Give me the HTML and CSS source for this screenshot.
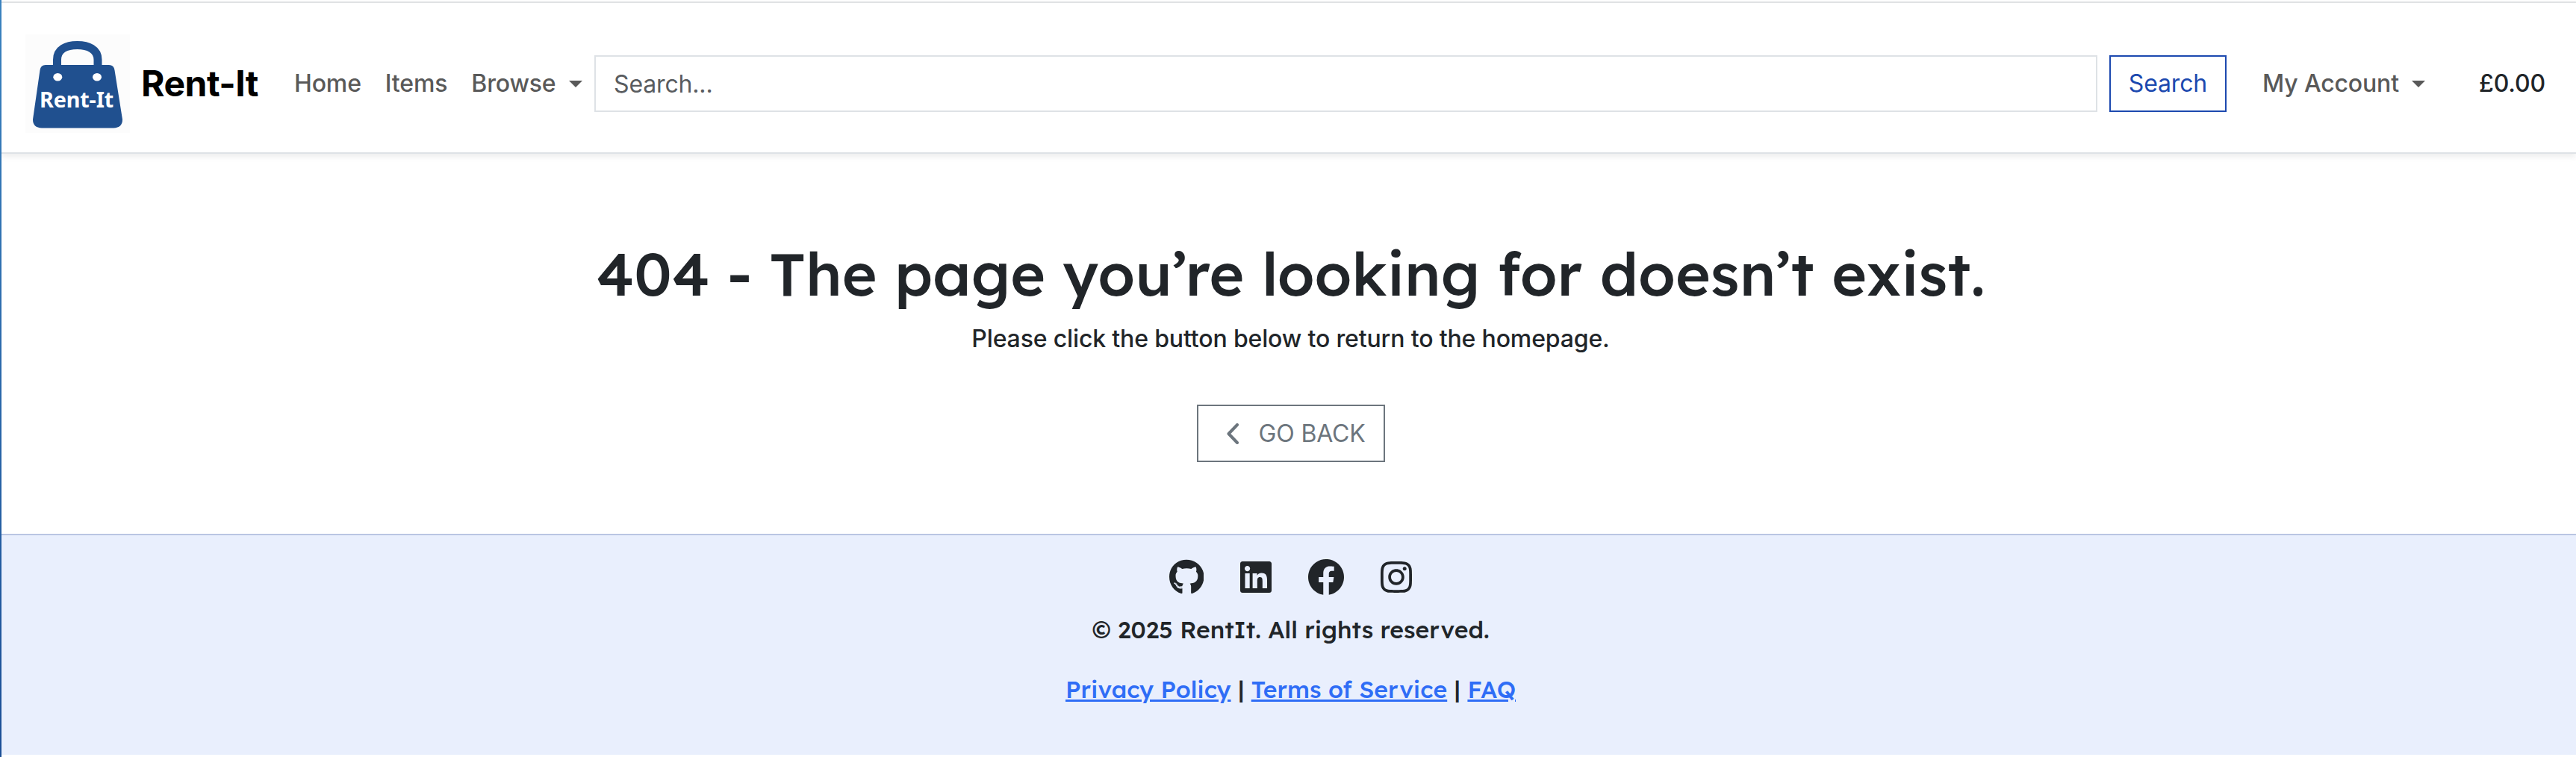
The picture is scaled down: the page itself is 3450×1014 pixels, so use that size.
FILE: index.html
```html
<!DOCTYPE html>
<html lang="en">
<head>
<meta charset="utf-8">
<title>Rent-It</title>
<link rel="stylesheet" href="styles.css">
</head>
<body>
<header class="navbar">
  <a class="brand">
    <svg class="logo" viewBox="0 0 140 132">
      <rect width="140" height="132" fill="#fcfcfc"/>
      <path d="M42.500 44V34C42.500 20 55 14.500 69.500 14.500S97 20 97 34V44" fill="none" stroke="#20508f" stroke-width="11"/>
      <path d="M27 41H112Q118.500 41 119.500 48L130 114Q130 125 118 125.500H22Q10 125 10 114L19.500 48Q20.500 41 27 41Z" fill="#20508f"/>
      <ellipse cx="43.300" cy="57.300" rx="6" ry="5.300" fill="#fff"/>
      <ellipse cx="96" cy="57.300" rx="6" ry="5.300" fill="#fff"/>
      <text class="logo-text" x="19" y="98" textLength="99" lengthAdjust="spacingAndGlyphs">Rent-It</text>
    </svg>
    <span class="brand-name">Rent-It</span>
  </a>
  <nav class="links">
    <a class="link">Home</a>
    <a class="link">Items</a>
    <a class="link toggle">Browse</a>
  </nav>
  <form class="search">
    <input class="field" type="text" placeholder="Search...">
    <button class="btn btn-search" type="button">Search</button>
  </form>
  <a class="link toggle account">My Account</a>
  <span class="total">£0.00</span>
</header>
<main class="content">
  <h1 class="title">404 - The page you’re looking for doesn’t exist.</h1>
  <p class="lead">Please click the button below to return to the homepage.</p>
  <a class="btn btn-back">
    <svg class="chevron" viewBox="0 0 16 28"><path d="M14 2L2.500 14L14 26" fill="none" stroke="currentColor" stroke-width="4" stroke-linecap="round" stroke-linejoin="round"/></svg>
    GO BACK
  </a>
</main>
<footer class="footer">
  <div class="social">
    <svg class="icon" width="46.500" height="48" viewBox="0 0 496 512"><path d="M165.900 397.400c0 2-2.300 3.600-5.200 3.600-3.300.3-5.600-1.300-5.600-3.600 0-2 2.300-3.600 5.200-3.600 3-.3 5.600 1.300 5.600 3.600zm-31.100-4.500c-.7 2 1.300 4.300 4.300 4.900 2.600 1 5.600 0 6.200-2s-1.300-4.300-4.300-5.200c-2.600-.7-5.500.3-6.200 2.300zm44.200-1.700c-2.900.7-4.900 2.600-4.600 4.900.3 2 2.900 3.300 5.900 2.600 2.900-.7 4.900-2.600 4.600-4.600-.3-1.900-3-3.200-5.900-2.900zM244.800 8C106.100 8 0 113.300 0 252c0 110.900 69.800 205.800 169.500 239.200 12.800 2.300 17.300-5.600 17.300-12.100 0-6.200-.3-40.400-.3-61.400 0 0-70 15-84.700-29.800 0 0-11.400-29.100-27.800-36.600 0 0-22.900-15.700 1.600-15.400 0 0 24.900 2 38.600 25.800 21.900 38.600 58.600 27.500 72.900 20.900 2.300-16 8.800-27.100 16-33.700-55.900-6.200-112.300-14.300-112.300-110.500 0-27.500 7.600-41.300 23.600-58.900-2.600-6.500-11.100-33.300 2.600-67.900 20.900-6.500 69 27 69 27 20-5.600 41.500-8.500 62.800-8.500s42.800 2.900 62.800 8.500c0 0 48.100-33.600 69-27 13.700 34.700 5.200 61.400 2.600 67.900 16 17.700 25.800 31.500 25.800 58.900 0 96.500-58.900 104.200-114.800 110.500 9.200 7.900 17 22.900 17 46.400 0 33.700-.3 75.400-.3 83.600 0 6.500 4.600 14.400 17.300 12.100C428.200 457.800 496 362.900 496 252 496 113.300 383.500 8 244.800 8zM97.200 352.900c-1.300 1-1 3.300.7 5.200 1.600 1.600 3.900 2.300 5.200 1 1.300-1 1-3.300-.7-5.200-1.600-1.600-3.900-2.300-5.200-1zm-10.800-8.100c-.7 1.300.3 2.900 2.300 3.900 1.600 1 3.600.7 4.300-.7.7-1.300-.3-2.900-2.300-3.900-2-.6-3.600-.3-4.300.7zm32.400 35.600c-1.600 1.300-1 4.300 1.300 6.200 2.300 2.300 5.200 2.600 6.500 1 1.300-1.300.7-4.300-1.300-6.200-2.200-2.300-5.200-2.600-6.500-1zm-11.400-14.700c-1.600 1-1.600 3.600 0 5.900 1.600 2.300 4.300 3.300 5.600 2.300 1.600-1.300 1.600-3.900 0-6.200-1.400-2.300-4-3.300-5.600-2z"/></svg>
    <svg class="icon" width="42" height="48" viewBox="0 0 448 512"><path d="M416 32H31.900C14.300 32 0 46.500 0 64.300v383.400C0 465.500 14.300 480 31.900 480H416c17.600 0 32-14.500 32-32.300V64.300c0-17.800-14.400-32.300-32-32.300zM135.400 416H69V202.200h66.500V416zm-33.200-243c-21.300 0-38.500-17.300-38.500-38.500S80.900 96 102.200 96c21.200 0 38.500 17.300 38.500 38.500 0 21.300-17.200 38.500-38.500 38.500zm282.100 243h-66.400V312c0-24.800-.5-56.700-34.500-56.700-34.600 0-39.900 27-39.900 54.900V416h-66.400V202.200h63.700v29.200h.9c8.900-16.800 30.600-34.500 62.900-34.500 67.200 0 79.700 44.300 79.700 101.900V416z"/></svg>
    <svg class="icon" width="48" height="48" viewBox="0 0 512 512"><path d="M512 256C512 114.600 397.400 0 256 0S0 114.600 0 256c0 127.800 93.600 233.700 216 252.900V330h-65v-74h65v-56.400c0-64.200 38.200-99.600 96.700-99.600 28 0 57.300 5 57.300 5v63h-32.300c-31.800 0-41.700 19.700-41.700 40v48h71l-11.400 74H296v178.900C418.400 489.700 512 383.800 512 256z"/></svg>
    <svg class="icon" width="42" height="48" viewBox="0 0 448 512"><path d="M224.100 141c-63.600 0-114.900 51.300-114.900 114.900s51.300 114.900 114.900 114.900S339 319.500 339 255.900 287.700 141 224.100 141zm0 189.600c-41.100 0-74.700-33.500-74.700-74.700s33.500-74.700 74.700-74.700 74.700 33.500 74.700 74.700-33.600 74.700-74.700 74.700zm146.400-194.300c0 14.900-12 26.800-26.800 26.800-14.900 0-26.800-12-26.800-26.800s12-26.800 26.800-26.800 26.800 12 26.800 26.800zm76.100 27.200c-1.700-35.900-9.900-67.700-36.200-93.900-26.200-26.200-58-34.400-93.900-36.200-37-2.100-147.900-2.100-184.900 0-35.800 1.700-67.600 9.900-93.900 36.100s-34.400 58-36.200 93.900c-2.100 37-2.100 147.900 0 184.900 1.700 35.900 9.900 67.700 36.200 93.900s58 34.400 93.900 36.200c37 2.100 147.900 2.100 184.900 0 35.900-1.700 67.700-9.900 93.900-36.200 26.200-26.200 34.400-58 36.200-93.900 2.100-37 2.100-147.800 0-184.800zM398.800 388c-7.800 19.600-22.900 34.700-42.600 42.600-29.500 11.700-99.500 9-132.100 9s-102.700 2.600-132.100-9c-19.600-7.800-34.700-22.900-42.600-42.600-11.700-29.500-9-99.500-9-132.100s-2.600-102.700 9-132.100c7.800-19.600 22.900-34.700 42.600-42.600 29.500-11.700 99.500-9 132.100-9s102.700-2.600 132.100 9c19.600 7.800 34.700 22.900 42.600 42.600 11.700 29.500 9 99.500 9 132.100s2.700 102.700-9 132.100z"/></svg>
  </div>
  <p class="copyright">© 2025 RentIt. All rights reserved.</p>
  <p class="legal"><a href="#">Privacy Policy</a> | <a href="#">Terms of Service</a> | <a href="#">FAQ</a></p>
</footer>
</body>
</html>
```
FILE: styles.css
```css
* { box-sizing: border-box; }
html { background: #fff; }
body {
  margin: 0;
  height: 1014px;
  overflow: hidden;
  border-left: 2px solid;
  border-image: linear-gradient(#3a82bf, #1b4f96) 1;
  display: flex;
  flex-direction: column;
  font: 500 32px/48px Inter, sans-serif;
  letter-spacing: -.15px;
  color: #212529;
  padding: 2px 0 3px;
}
.navbar {
  height: 204px;
  flex: none;
  display: flex;
  align-items: center;
  padding: 0 41px 0 32px;
  border-top: 2px solid #e0e2e4;
  border-bottom: 2px solid #dee2e6;
  box-shadow: 0 4px 8px rgba(0, 0, 0, .075);
}
.brand { display: flex; align-items: center; width: 360px; padding-top: 16px; }
.logo { width: 140px; height: 132px; display: block; }
.logo-text { font: 700 29px "Noto Sans", sans-serif; fill: #fff; }
.brand-name { margin-left: 15px; font-size: 48px; font-weight: 700; letter-spacing: -.5px; color: #000; }
.links { display: flex; gap: 32px; width: 402px; }
.link { color: #595959; display: flex; align-items: center; white-space: nowrap; }
.toggle::after {
  content: "";
  margin-left: 17px;
  border: 9px solid transparent;
  border-top-color: currentColor;
  border-bottom: 0;
}
.links, .search, .account, .total { margin-top: 16px; }
.search { display: flex; flex: 1; gap: 16px; }
.field, .btn { height: 76px; border: 2px solid; background: #fff; font: 400 32px/48px Inter, sans-serif; border-radius: 0; letter-spacing: -.15px; }
.field { flex: 1; border-color: #dee2e6; padding: 0 24px; }
.field::placeholder { color: #595c5f; opacity: 1; }
.btn-search { width: 157px; padding: 0; color: #1c49af; border-color: #1c49af; }
.account { margin-left: 48px; }
.total { margin-left: 72px; }
.content {
  height: 509px;
  flex: none;
  display: flex;
  flex-direction: column;
  align-items: center;
  padding: 112px 0 0 5px;
}
.title { margin: 0; font: 500 80px/96px Lexend, Inter, sans-serif; letter-spacing: 0; white-space: nowrap; }
.lead { margin: 16px 0 0; }
.btn-back { margin-top: 64px; width: 252px; height: 77px; display: flex; align-items: center; padding-left: 38px; color: #6c757d; }
.chevron { width: 16px; height: 28px; margin-right: 27px; }
.footer {
  flex: 1;
  background: #e9effd;
  border-top: 2px solid #b9c5e2;
  padding: 32px 0 0 5px;
  display: flex;
  flex-direction: column;
  align-items: center;
  font-family: Lexend, Inter, sans-serif;
  letter-spacing: 0;
}
.social { display: flex; gap: 49px; height: 48px; }
.icon { fill: #212529; }
.copyright { margin: 22px 0 0; }
.legal { margin: 32px 0 0; }
.legal a { color: #2f6df6; }
```
